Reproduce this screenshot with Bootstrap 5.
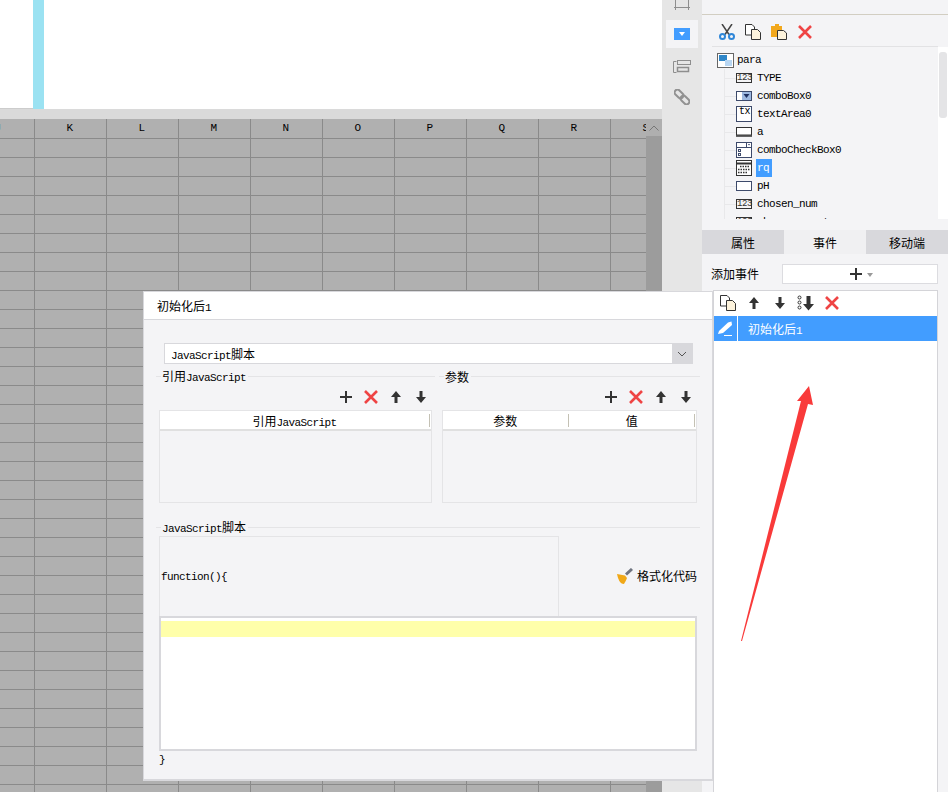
<!DOCTYPE html>
<html lang="zh">
<head>
<meta charset="utf-8">
<title>初始化后1</title>
<link rel="stylesheet" href="https://cdn.jsdelivr.net/npm/bootstrap@5.3.0/dist/css/bootstrap.min.css">
<style>
html,body{margin:0;height:792px;overflow:hidden}
body{font:12px/18px "Noto Sans CJK SC",sans-serif;color:#000;background:#f4f4f6}
.lat{font-family:"Liberation Mono",monospace;font-size:11px;letter-spacing:-.6px}
svg{display:block;flex:none}
.app{height:792px;position:relative}
.sheet{width:662px}
.sheet-top{height:109px;background:#fff}
.sheet-edge{width:33px;height:109px;border-bottom:1px solid #ccc}
.sheet-bar{width:11px;height:109px;background:#9be2f2}
.sheet-hs{height:10px;background:#dadada}
.sheet-main{height:673px}
.sheet-cells{width:646px;overflow:hidden;background-color:#b0b0b0}
.head-row{height:20px;width:720px;margin-left:-37px;border-bottom:1px solid #8a8a8a}
.head-cell{width:72px;flex:none;border-right:1px solid #8a8a8a;text-align:center;line-height:19px;padding-right:2px}
.cell-grid{height:653px;background-image:linear-gradient(to bottom,transparent 18px,#8a8a8a 18px),linear-gradient(to right,#8a8a8a 1px,transparent 1px);background-size:100% 19px,72px 100%;background-position:0 0,34px 0}
.vscroll{width:16px;background:#9c9c9c}
.vscroll-up{height:17px;background:#afafaf}
.rail{width:40px;background:#e6e6e6}
.rail-on{width:32px;height:28px;background:#f4f4f6;margin-top:10px}
.rail-tree{margin-top:12px}
.rail-link{margin-top:15px}
.panel{width:246px}
.panel-top{height:15px;border-bottom:1px solid #d2cec2}
.panel-tools{height:32px;margin:0 10px;padding:3px 0 0 7px;border-bottom:1px solid #e2e2e4;gap:10px}
.tree-wrap{height:172px}
.tree{width:226px;margin-left:10px;overflow:hidden;padding-top:4px}
.tree-root{height:18px;padding-left:5px;gap:3px}
.tree-kids{margin-left:12px;border-left:1px solid #e8e8ea}
.tree-row{height:18px}
.tree-stub{width:11px;height:1px;background:#e8e8ea;flex:none}
.tree-ic{width:16px;margin-right:5px;display:flex;justify-content:center;flex:none}
.tree-on{background:#429dff;color:#fff;display:inline-block;padding:0 3px 0 0;margin-left:-1px;padding-left:1px;height:18px;margin-top:-1px}
.ic-num{width:16px;height:10px;border:1px solid #333;font:9px/8px "Liberation Mono",monospace;letter-spacing:-.4px;text-align:center;color:#333}
.ic-tx{width:16px;height:16px;border:1px solid #3d4a6b;font:10px/9px "Liberation Mono",monospace;padding-left:2px;background:#fff}
.tree-sb{width:10px;background:#fff;padding:5px 1px 0}
.tree-thumb{width:8px;height:66px;background:#e4e4e6;border-radius:3px}
.tabs{height:24px;margin-top:11px}
.tab-off,.tab-cur{width:82px;text-align:center;line-height:25px}
.tab-off{background:#d8d8dc}
.tab-cur{background:#f0f0f2}
.add-row{height:36px;padding:10px 0 0 9px}
.add-label{width:71px;line-height:20px}
.add-btn{width:156px;height:20px;background:#fff;border:1px solid #dcdce0}
.caret-sm{width:0;height:0;border-left:3px solid transparent;border-right:3px solid transparent;border-top:4px solid #999;margin-left:3px;margin-top:2px}
.ev-list{margin-left:11px;width:225px;background:#fff;border:1px solid #d4d4d8;border-bottom:0}
.ev-tools{height:25px;padding:0 0 2px 1px}
.ev-tool{width:26px}
.ev-row{height:25px;background:#429dff;color:#fff;line-height:25px}
.ev-pen{width:24px;border-right:1px solid #fff;height:25px;padding-left:4px}
.ev-name{padding-left:10px}
.dlg{position:absolute;left:143px;top:291px;width:570px;height:490px;background:#f4f4f6;border:1px solid #d8d8dc;border-bottom-width:2px}
.dlg-title{height:28px;background:#fff;border-bottom:1px solid #d8d8dc;padding-left:13px;line-height:27px}
.dlg-sel{margin:23px 0 0 20px;width:529px;height:21px;background:#fff;border:1px solid #d8d8dc;padding-left:6px;line-height:20px}
.dlg-drop{width:20px;height:19px;background:#d8d8dc}
.fs-cols{margin:4px 0 0 12px}
.fs-l{width:279px}
.fs-r{width:261px;margin-left:4px}
.fs-head{height:16px}
.fs-line{height:1px;background:#e4e4e6;flex:1}
.fs-short{flex:none;width:5px}
.fs-text{padding:1px 2px 0 1px;white-space:nowrap;line-height:16px}
.fs-tools{height:26px;padding-right:2px}
.fs-btn{width:25px}
.fs-box{margin-left:3px;height:93px;border:1px solid #e4e4e6}
.fs-l .fs-box{width:273px}
.fs-r .fs-box{width:255px}
.fs-hd{height:20px;background:#fff;border-bottom:2px solid #e0e0e0}
.fs-hc{text-align:center;line-height:19px;position:relative;padding-right:2px}
.fs-hc::after{content:"";position:absolute;right:1px;top:3px;bottom:2px;width:1px;background:#c4c1b4}
.code-title{margin:16px 0 0 12px;width:544px}
.code-mid{margin:1px 0 0 15px;height:80px}
.code-fn{width:400px;border:1px solid #e4e4e6;border-bottom:0;padding-left:1px}
.code-fmt{width:138px;gap:4px}
.editor{margin-left:15px;width:538px;height:135px;background:#fff;border:2px solid #d8d8dc;padding-top:3px}
.editor-hl{height:16px;background:#ffffaa}
.code-end{margin-left:15px;height:18px;margin-top:0}
.arrow{position:absolute;left:735px;top:380px}
</style>
</head>
<body>
<svg width="0" height="0" style="position:absolute">
<defs>
<symbol id="i-x" viewBox="0 0 16 16"><path d="M2 2 14 14M14 2 2 14" stroke="#ef4444" stroke-width="2.6" fill="none"/></symbol>
<symbol id="i-plus" viewBox="0 0 16 16"><path d="M2 8H14M8 2V14" stroke="#333" stroke-width="2" fill="none"/></symbol>
<symbol id="i-up" viewBox="0 0 16 16"><path d="M8 2 13 8H9.500V14H6.500V8H3Z" fill="#333"/></symbol>
<symbol id="i-down" viewBox="0 0 16 16"><path d="M8 14 13 8H9.500V2H6.500V8H3Z" fill="#333"/></symbol>
<symbol id="i-copy" viewBox="0 0 16 16"><path d="M.5 .5H7L9.500 3V11H.5Z" fill="#fff" stroke="#333"/><path d="M6.500 5.500H12.500L15.500 8.500V15.500H6.500Z" fill="#fdf3dc" stroke="#333"/></symbol>
<symbol id="i-paste" viewBox="0 0 16 16"><path d="M0 2H4V0H8V2H11V13H0Z" fill="#f2a81c"/><path d="M6.500 6.500H12.500L15.500 9V15.500H6.500Z" fill="#fdf3dc" stroke="#333"/></symbol>
<symbol id="i-cut" viewBox="0 0 16 16"><path d="M3 0 10 10.500M13 0 6 10.500" stroke="#444" stroke-width="1.500" fill="none"/><circle cx="3.500" cy="12.500" r="2.500" fill="none" stroke="#2f86d8" stroke-width="2"/><circle cx="12.500" cy="12.500" r="2.500" fill="none" stroke="#2f86d8" stroke-width="2"/></symbol>
</defs>
</svg>
<div class="app d-flex">
  <div class="sheet">
    <div class="sheet-top d-flex"><div class="sheet-edge"></div><div class="sheet-bar"></div></div>
    <div class="sheet-hs"></div>
    <div class="sheet-main d-flex">
      <div class="sheet-cells">
        <div class="head-row d-flex lat">
          <div class="head-cell">J</div><div class="head-cell">K</div><div class="head-cell">L</div><div class="head-cell">M</div><div class="head-cell">N</div><div class="head-cell">O</div><div class="head-cell">P</div><div class="head-cell">Q</div><div class="head-cell">R</div><div class="head-cell">S</div>
        </div>
        <div class="cell-grid"></div>
      </div>
      <div class="vscroll">
        <div class="vscroll-up d-flex align-items-center justify-content-center"><svg width="10" height="6" viewBox="0 0 10 6"><path d="M.5 5.500 5 1 9.500 5.500" stroke="#777" fill="none"/></svg></div>
      </div>
    </div>
  </div>

  <div class="rail d-flex flex-column align-items-center">
    <svg width="16" height="10" viewBox="0 0 16 10"><path d="M1.500 0V10M14.500 0V10M0 7.500H16" stroke="#8e8e8e" fill="none"/></svg>
    <div class="rail-on d-flex align-items-center justify-content-center"><svg width="16" height="12" viewBox="0 0 16 12"><rect width="16" height="12" fill="#429dff"/><path d="M5 4H11L8 8Z" fill="#fff"/></svg></div>
    <svg class="rail-tree" width="18" height="14" viewBox="0 0 18 14"><path d="M3.500 1.500H.5V12.500H3.500" stroke="#8e8e8e" fill="none"/><rect x="4.500" y=".5" width="13" height="4" fill="none" stroke="#8e8e8e"/><rect x="4.500" y="7.500" width="11" height="4" fill="none" stroke="#8e8e8e" stroke-width="1.500"/></svg>
    <svg class="rail-link" width="16" height="16" viewBox="0 0 16 16"><g fill="none" stroke="#929292" stroke-width="2"><rect x="-5" y="-2.800" width="10" height="5.600" rx="2.800" transform="translate(5 5) rotate(45)"/><rect x="-5" y="-2.800" width="10" height="5.600" rx="2.800" transform="translate(11 11) rotate(45)"/></g></svg>
  </div>

  <div class="panel d-flex flex-column">
    <div class="panel-top"></div>
    <div class="panel-tools d-flex align-items-center">
      <svg width="16" height="16"><use href="#i-cut"/></svg>
      <svg width="16" height="16"><use href="#i-copy"/></svg>
      <svg width="16" height="16"><use href="#i-paste"/></svg>
      <svg width="16" height="16"><use href="#i-x"/></svg>
    </div>
    <div class="tree-wrap d-flex">
      <div class="tree lat">
        <div class="tree-root d-flex align-items-center">
          <svg width="17" height="15" viewBox="0 0 17 15"><rect x=".5" y=".5" width="16" height="14" fill="#fff" stroke="#666"/><rect x="2" y="2" width="8" height="6" fill="#2f86c8"/><rect x="8" y="7" width="7" height="6" fill="#b8d6f2"/></svg>
          <span>para</span>
        </div>
        <div class="tree-kids">
          <div class="tree-row d-flex align-items-center"><span class="tree-stub"></span><span class="tree-ic"><span class="ic-num">123</span></span><span>TYPE</span></div>
          <div class="tree-row d-flex align-items-center"><span class="tree-stub"></span><span class="tree-ic"><svg width="16" height="10" viewBox="0 0 16 10"><rect x=".5" y=".5" width="15" height="9" fill="#fff" stroke="#3d4a6b"/><rect x="6" y="1" width="9" height="8" fill="#9db8e0"/><path d="M7.500 3H13.500L10.500 7Z" fill="#1f3060"/></svg></span><span>comboBox0</span></div>
          <div class="tree-row d-flex align-items-center"><span class="tree-stub"></span><span class="tree-ic"><span class="ic-tx">tx</span></span><span>textArea0</span></div>
          <div class="tree-row d-flex align-items-center"><span class="tree-stub"></span><span class="tree-ic"><svg width="16" height="10" viewBox="0 0 16 10"><rect x=".5" y=".5" width="15" height="7.500" fill="#fff" stroke="#333"/><path d="M0 9H16" stroke="#333" stroke-width="1.500"/></svg></span><span>a</span></div>
          <div class="tree-row d-flex align-items-center"><span class="tree-stub"></span><span class="tree-ic"><svg width="16" height="16" viewBox="0 0 16 16"><rect x=".5" y=".5" width="15" height="15" fill="#fff" stroke="#3d4a6b"/><path d="M0 5.500H16M10.500 0V5" stroke="#3d4a6b" fill="none"/><path d="M12 2H14L13 3.500Z" fill="#1f3060"/><rect x="2.500" y="7.500" width="2" height="2" fill="none" stroke="#3d4a6b"/><rect x="2.500" y="11.500" width="2" height="2" fill="none" stroke="#3d4a6b"/></svg></span><span>comboCheckBox0</span></div>
          <div class="tree-row d-flex align-items-center"><span class="tree-stub"></span><span class="tree-ic"><svg width="16" height="16" viewBox="0 0 16 16"><rect x=".5" y=".5" width="15" height="15" fill="#fff" stroke="#333"/><path d="M0 3.500H16" stroke="#333" stroke-width="2"/><path d="M4 6.500H14M2 9.500H14M2 12.500H12" stroke="#333" stroke-width="1.500" stroke-dasharray="1.500 1"/></svg></span><span class="tree-on">rq</span></div>
          <div class="tree-row d-flex align-items-center"><span class="tree-stub"></span><span class="tree-ic"><svg width="16" height="10" viewBox="0 0 16 10"><rect x=".5" y=".5" width="15" height="9" fill="#fff" stroke="#3d4a6b"/></svg></span><span>pH</span></div>
          <div class="tree-row d-flex align-items-center"><span class="tree-stub"></span><span class="tree-ic"><span class="ic-num">123</span></span><span>chosen_num</span></div>
          <div class="tree-row d-flex align-items-center"><span class="tree-stub"></span><span class="tree-ic"><span class="ic-num">123</span></span><span>chosen_count</span></div>
        </div>
      </div>
      <div class="tree-sb"><div class="tree-thumb"></div></div>
    </div>
    <div class="tabs d-flex">
      <div class="tab-off">属性</div><div class="tab-cur">事件</div><div class="tab-off">移动端</div>
    </div>
    <div class="add-row d-flex align-items-start">
      <span class="add-label">添加事件</span>
      <div class="add-btn d-flex align-items-center justify-content-center"><svg width="16" height="16"><use href="#i-plus"/></svg><span class="caret-sm"></span></div>
    </div>
    <div class="ev-list flex-grow-1">
      <div class="ev-tools d-flex align-items-center">
        <span class="ev-tool d-flex justify-content-center"><svg width="16" height="16"><use href="#i-copy"/></svg></span>
        <span class="ev-tool d-flex justify-content-center"><svg width="16" height="16"><use href="#i-up"/></svg></span>
        <span class="ev-tool d-flex justify-content-center"><svg width="16" height="16"><use href="#i-down"/></svg></span>
        <span class="ev-tool d-flex justify-content-center"><svg width="18" height="16" viewBox="0 0 18 16"><circle cx="2.500" cy="2.500" r="1.500" fill="none" stroke="#333"/><circle cx="2.500" cy="7.500" r="1.500" fill="none" stroke="#333"/><circle cx="2.500" cy="12.500" r="1.500" fill="none" stroke="#333"/><path d="M11.500 15.500 17 9H13.500V1H9.500V9H6Z" fill="#333"/></svg></span>
        <span class="ev-tool d-flex justify-content-center"><svg width="16" height="16"><use href="#i-x"/></svg></span>
      </div>
      <div class="ev-row d-flex">
        <div class="ev-pen d-flex align-items-center"><svg width="15" height="15" viewBox="0 0 15 15"><path d="M1 10 10 1.500 13.500 .5 14 4 5 12 0 13Z" fill="#fff"/><path d="M6 14.500H14" stroke="#fff"/></svg></div>
        <div class="ev-name">初始化后<span class="lat">1</span></div>
      </div>
    </div>
  </div>

  <div class="dlg">
    <div class="dlg-title">初始化后<span class="lat">1</span></div>
    <div class="dlg-sel d-flex justify-content-between">
      <span><span class="lat">JavaScript</span>脚本</span>
      <span class="dlg-drop d-flex align-items-center justify-content-center"><svg width="10" height="6" viewBox="0 0 10 6"><path d="M1 1 5 5 9 1" stroke="#555" fill="none"/></svg></span>
    </div>
    <div class="fs-cols d-flex">
      <div class="fs-l">
        <div class="fs-head d-flex align-items-center"><span class="fs-line fs-short"></span><span class="fs-text">引用<span class="lat">JavaScript</span></span><span class="fs-line"></span></div>
        <div class="fs-tools d-flex justify-content-end align-items-center">
          <span class="fs-btn d-flex justify-content-center"><svg width="16" height="16"><use href="#i-plus"/></svg></span>
          <span class="fs-btn d-flex justify-content-center"><svg width="16" height="16"><use href="#i-x"/></svg></span>
          <span class="fs-btn d-flex justify-content-center"><svg width="16" height="16"><use href="#i-up"/></svg></span>
          <span class="fs-btn d-flex justify-content-center"><svg width="16" height="16"><use href="#i-down"/></svg></span>
        </div>
        <div class="fs-box"><div class="fs-hd d-flex"><div class="fs-hc w-100">引用<span class="lat">JavaScript</span></div></div></div>
      </div>
      <div class="fs-r">
        <div class="fs-head d-flex align-items-center"><span class="fs-line fs-short"></span><span class="fs-text">参数</span><span class="fs-line"></span></div>
        <div class="fs-tools d-flex justify-content-end align-items-center">
          <span class="fs-btn d-flex justify-content-center"><svg width="16" height="16"><use href="#i-plus"/></svg></span>
          <span class="fs-btn d-flex justify-content-center"><svg width="16" height="16"><use href="#i-x"/></svg></span>
          <span class="fs-btn d-flex justify-content-center"><svg width="16" height="16"><use href="#i-up"/></svg></span>
          <span class="fs-btn d-flex justify-content-center"><svg width="16" height="16"><use href="#i-down"/></svg></span>
        </div>
        <div class="fs-box"><div class="fs-hd d-flex"><div class="fs-hc w-50">参数</div><div class="fs-hc w-50">值</div></div></div>
      </div>
    </div>
    <div class="code-title fs-head d-flex align-items-center"><span class="fs-line fs-short"></span><span class="fs-text"><span class="lat">JavaScript</span>脚本</span><span class="fs-line"></span></div>
    <div class="code-mid d-flex">
      <div class="code-fn d-flex align-items-center lat">function(){</div>
      <div class="code-fmt d-flex align-items-center justify-content-end">
        <svg width="16" height="16" viewBox="0 0 16 16"><path d="M9 6.500 15 1" stroke="#6f7480" stroke-width="3"/><path d="M0 6 8 7.500 10 10C9 13 7.500 15 7 16 3 16 1 11 0 6Z" fill="#f0a818"/></svg>
        <span>格式化代码</span>
      </div>
    </div>
    <div class="editor"><div class="editor-hl"></div></div>
    <div class="code-end lat">}</div>
  </div>

  <svg class="arrow" width="85" height="270" viewBox="735 380 85 270"><path d="M741 641 801 401 797 401 809 386 813 405 808 404 742 641Z" fill="#f93a3a"/></svg>
</div>
<script src="https://cdn.jsdelivr.net/npm/bootstrap@5.3.0/dist/js/bootstrap.bundle.min.js"></script>
</body>
</html>
